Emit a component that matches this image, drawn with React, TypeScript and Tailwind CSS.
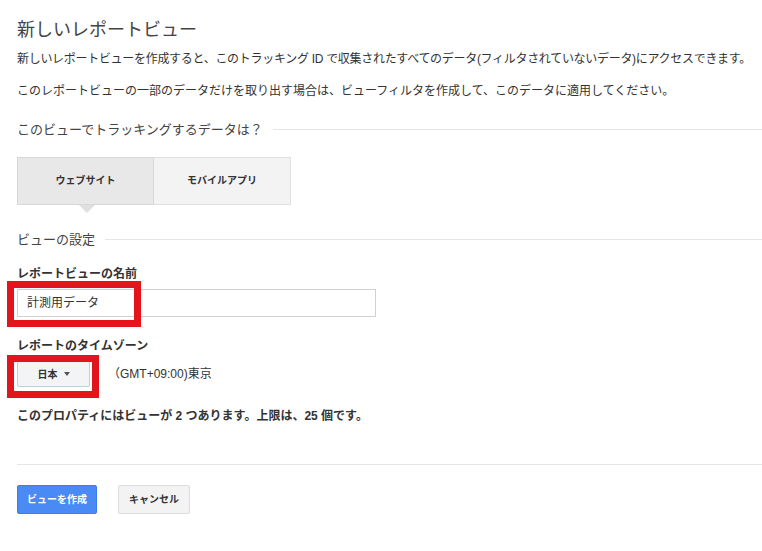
export default function App() {
  const f = { fontFamily: '"Liberation Sans", "Noto Sans CJK JP", sans-serif' };
  return (
    <div className="relative w-[762px] h-[551px] bg-white text-[#333] overflow-hidden" style={f}>
      <div className="pl-[17px] pt-[18px]">
        <div className="text-[18px] leading-[24px] text-[#444]">新しいレポートビュー</div>
        <div className="mt-[8px] text-[12px] leading-[18px] whitespace-nowrap tracking-[-0.3px]">新しいレポートビューを作成すると、このトラッキング ID で収集されたすべてのデータ(フィルタされていないデータ)にアクセスできます。</div>
        <div className="mt-[14px] text-[12px] leading-[18px] whitespace-nowrap">このレポートビューの一部のデータだけを取り出す場合は、ビューフィルタを作成して、このデータに適用してください。</div>
        <div className="mt-[20px] flex items-center gap-[10px]">
          <span className="text-[13px] text-[#444]">このビューでトラッキングするデータは？</span>
          <div className="flex-1 h-px bg-[#e5e5e5]" />
        </div>
        <div className="mt-[17px] flex w-[274px] h-[48px] relative">
          <div className="w-[137px] flex items-center justify-center bg-[#e8e8e8] border border-[#d8d8d8] text-[10px] font-bold">ウェブサイト</div>
          <div className="w-[137px] flex items-center justify-center bg-[#f3f3f3] border border-l-0 border-[#e0e0e0] text-[10px] font-bold">モバイルアプリ</div>
          <div className="absolute left-[62px] top-[48px] w-0 h-0 border-l-[8px] border-r-[8px] border-t-[8px] border-l-transparent border-r-transparent border-t-[#e0e0e0]" />
        </div>
        <div className="mt-[25px] flex items-center gap-[10px]">
          <span className="text-[13px] text-[#444]">ビューの設定</span>
          <div className="flex-1 h-px bg-[#e5e5e5]" />
        </div>
        <div className="mt-[16px] text-[12px] font-bold">レポートビューの名前</div>
        <div className="mt-[6px] w-[359px] h-[28px] border border-[#d0d0d0] flex items-center px-[9px] text-[12px]">計測用データ</div>
        <div className="mt-[20px] text-[12px] font-bold">レポートのタイムゾーン</div>
        <div className="mt-[6px] flex items-center gap-[18px]">
          <div className="w-[73px] h-[26px] bg-[#f3f4f6] border border-[#c8ccd4] rounded-[2px] flex items-center justify-center gap-[6px] text-[10px] font-bold">
            日本 <span className="w-0 h-0 border-l-[3px] border-r-[3px] border-t-[4px] border-l-transparent border-r-transparent border-t-[#555]" />
          </div>
          <span className="text-[12px]">（GMT+09:00)東京</span>
        </div>
        <div className="mt-[20px] text-[12px] font-bold">このプロパティにはビューが 2 つあります。上限は、25 個です。</div>
        <div className="mt-[39px] h-px bg-[#e5e5e5]" />
        <div className="mt-[20px] flex gap-[21px]">
          <div className="w-[80px] h-[29px] bg-[#4a8af4] rounded-[2px] border border-[#3b7de9] text-white text-[10px] font-bold flex items-center justify-center">ビューを作成</div>
          <div className="w-[72px] h-[29px] bg-[#f3f3f3] rounded-[2px] border border-[#dcdcdc] text-[10px] font-bold flex items-center justify-center">キャンセル</div>
        </div>
      </div>
      <div className="absolute left-[7px] top-[281px] w-[134px] h-[46px] border-[7px] border-[#e3141c]" />
      <div className="absolute left-[7px] top-[355px] w-[92px] h-[43px] border-[7px] border-[#e3141c]" />
    </div>
  );
}
